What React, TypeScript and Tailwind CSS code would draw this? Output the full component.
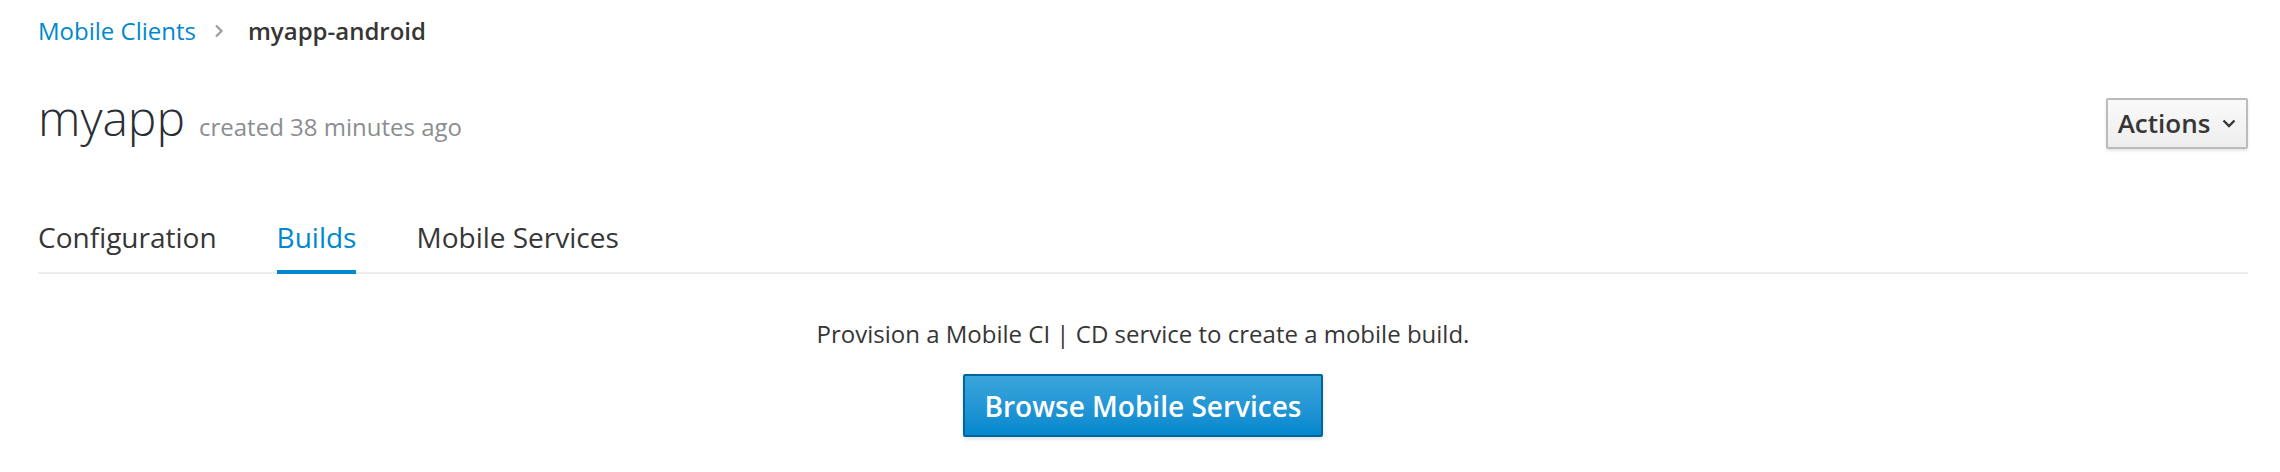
import React from "react";

export default function App() {
  return (
    <div className="w-[2280px] h-[472px] bg-white text-[#363636] font-['Open_Sans',sans-serif] pl-[38px] pr-[32px] pt-[13px] overflow-hidden">
      {/* Breadcrumb */}
      <div className="flex items-center h-[36px] text-[24px] leading-[36px]">
        <a className="text-[#0088ce]">Mobile Clients</a>
        <span className="ml-[18px] mr-[24px] flex items-center">
          <svg width="10" height="14" viewBox="0 0 10 14" fill="none">
            <path d="M2 1.5 L7.5 7 L2 12.5" stroke="#9c9c9c" strokeWidth="2.2" />
          </svg>
        </span>
        <span className="font-semibold text-[#363636]">myapp-android</span>
      </div>

      {/* Title row */}
      <div className="mt-[41px] flex justify-between items-start">
        <div className="flex items-baseline h-[56px]">
          <h1 className="text-[48px] leading-[56px] font-light text-[#292e34]">myapp</h1>
          <span className="ml-[14px] text-[24px] text-[#8b8d8f]">created 38 minutes ago</span>
        </div>
        <button className="mt-[8px] h-[51px] w-[142px] flex items-center justify-center gap-[12px] border-2 border-[#bbbbbb] rounded-[2px] bg-gradient-to-b from-[#fafafa] to-[#ededed] shadow-[0_2px_3px_rgba(0,0,0,0.1)] text-[26px] font-semibold text-[#363636]">
          <span>Actions</span>
          <svg width="14" height="9" viewBox="0 0 14 9" fill="none">
            <path d="M1.5 1.5 L7 7 L12.5 1.5" stroke="#363636" strokeWidth="2.4" />
          </svg>
        </button>
      </div>

      {/* Tabs */}
      <ul className="mt-[68px] flex gap-[60px] border-b-2 border-[#ededed]">
        <li className="-mb-[2px] pb-[13px] border-b-4 border-transparent text-[28px] leading-[40px] text-[#363636]">Configuration</li>
        <li className="-mb-[2px] pb-[13px] border-b-4 border-[#0088ce] text-[28px] leading-[40px] text-[#0088ce]">Builds</li>
        <li className="-mb-[2px] pb-[13px] border-b-4 border-transparent text-[28px] leading-[40px] text-[#363636]">Mobile Services</li>
      </ul>

      {/* Empty state */}
      <div className="flex flex-col items-center">
        <p className="mt-[42px] text-[24px] leading-[36px] text-[#363636]">
          Provision a Mobile CI | CD service to create a mobile build.
        </p>
        <button className="mt-[22px] h-[63px] w-[360px] flex items-center justify-center border-2 border-[#00659c] rounded-[2px] bg-gradient-to-b from-[#39a5dc] to-[#0088ce] shadow-[0_2px_4px_rgba(0,0,0,0.12)] text-white text-[28px] font-semibold">
          Browse Mobile Services
        </button>
      </div>
    </div>
  );
}
